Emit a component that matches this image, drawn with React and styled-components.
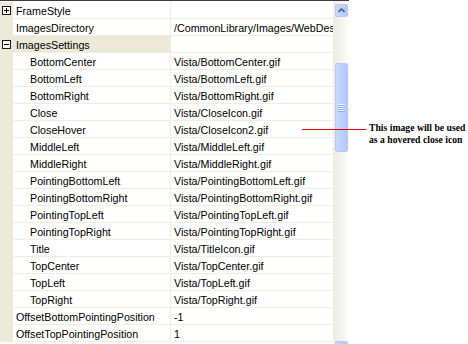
import React from "react";
import styled, { createGlobalStyle } from "styled-components";

const GUTTER = "#ECE9D8";
const LINE = "#F0EEE2";

const Global = createGlobalStyle`
  html, body { margin: 0; padding: 0; background: #fff; }
  #root { width: 468px; height: 344px; }
`;

const Page = styled.div`
  position: relative;
  width: 468px;
  height: 344px;
  overflow: hidden;
  background: #fff;
  font-family: "Liberation Sans", Arial, sans-serif;
  font-size: 10.7px;
  color: #000;
`;

const Panel = styled.div`
  display: flex;
  width: 349px;
  height: 344px;
  border-top: 1px solid #3c3c3c;
  box-sizing: border-box;
`;

const Table = styled.div`
  width: 334px;
  display: flex;
  flex-direction: column;
  padding-top: 1px;
`;

const Row = styled.div`
  display: grid;
  grid-template-columns: 13px 158px 163px;
  height: 17px;
  flex: none;
`;

const Gutter = styled.div`
  background: ${GUTTER};
  display: flex;
  align-items: center;
  padding-left: 2px;
`;

const ToggleBox = styled.div`
  position: relative;
  width: 9px;
  height: 9px;
  box-sizing: border-box;
  border: 1px solid #1a1a1a;
  background: #fff;
  &::before {
    content: "";
    position: absolute;
    left: 1px;
    top: 3px;
    width: 5px;
    height: 1px;
    background: #000;
  }
  &::after {
    content: "";
    display: ${(p) => (p.$open ? "none" : "block")};
    position: absolute;
    left: 3px;
    top: 1px;
    width: 1px;
    height: 5px;
    background: #000;
  }
`;

const NameCell = styled.div`
  box-sizing: border-box;
  height: 17px;
  padding: 3px 0 0 ${(p) => (p.$sub ? 17 : 3)}px;
  line-height: 13px;
  background: ${(p) => (p.$category ? GUTTER : "#fff")};
  border-bottom: 1px solid ${LINE};
  border-right: 1px solid ${LINE};
  white-space: nowrap;
  overflow: hidden;
`;

const ValueCell = styled.div`
  box-sizing: border-box;
  height: 17px;
  padding: 3px 0 0 3px;
  line-height: 13px;
  border-bottom: 1px solid ${LINE};
  border-right: 1px solid ${LINE};
  white-space: nowrap;
  overflow: hidden;
`;

const Scrollbar = styled.div`
  width: 15px;
  display: flex;
  flex-direction: column;
  padding: 3px 0 0 1px;
  overflow: hidden;
  background: linear-gradient(to right, #eeede5, #f6f5ef 60%, #fdfdfb);
`;

const blueButton = `
  box-sizing: border-box;
  width: 13px;
  border: 1px solid #b6c9f4;
  border-radius: 2px;
  background: linear-gradient(to right, #c9d9fd, #bcd0fb 50%, #b2c7f6);
  flex: none;
`;

const ArrowButton = styled.div`
  ${blueButton}
  height: 13px;
  display: flex;
  align-items: center;
  justify-content: center;
  margin-bottom: ${(p) => (p.$down ? "-10px" : "0")};
`;

const Thumb = styled.div`
  ${blueButton}
  height: 89px;
  margin-top: 46px;
  display: flex;
  flex-direction: column;
  align-items: center;
  justify-content: center;
  gap: 1px;
`;

const Grip = styled.span`
  width: 7px;
  height: 1px;
  background: #eef3ff;
  box-shadow: 0 1px 0 #8faaf0;
`;

const Track = styled.div`
  flex: 1;
`;

const Note = styled.div`
  position: absolute;
  left: 302px;
  top: 122px;
  display: flex;
  align-items: flex-start;
  gap: 3px;
`;

const Leader = styled.div`
  width: 64px;
  height: 1px;
  margin-top: 7px;
  background: #e00000;
`;

const NoteText = styled.div`
  font-family: "Liberation Serif", "Times New Roman", serif;
  font-weight: bold;
  font-size: 9.7px;
  line-height: 12px;
  color: #000;
  white-space: nowrap;
`;

const rows = [
  { name: "FrameStyle", value: "", toggle: "closed" },
  { name: "ImagesDirectory", value: "/CommonLibrary/Images/WebDesktop/" },
  { name: "ImagesSettings", value: "", toggle: "open", category: true },
  { name: "BottomCenter", value: "Vista/BottomCenter.gif", sub: true },
  { name: "BottomLeft", value: "Vista/BottomLeft.gif", sub: true },
  { name: "BottomRight", value: "Vista/BottomRight.gif", sub: true },
  { name: "Close", value: "Vista/CloseIcon.gif", sub: true },
  { name: "CloseHover", value: "Vista/CloseIcon2.gif", sub: true },
  { name: "MiddleLeft", value: "Vista/MiddleLeft.gif", sub: true },
  { name: "MiddleRight", value: "Vista/MiddleRight.gif", sub: true },
  { name: "PointingBottomLeft", value: "Vista/PointingBottomLeft.gif", sub: true },
  { name: "PointingBottomRight", value: "Vista/PointingBottomRight.gif", sub: true },
  { name: "PointingTopLeft", value: "Vista/PointingTopLeft.gif", sub: true },
  { name: "PointingTopRight", value: "Vista/PointingTopRight.gif", sub: true },
  { name: "Title", value: "Vista/TitleIcon.gif", sub: true },
  { name: "TopCenter", value: "Vista/TopCenter.gif", sub: true },
  { name: "TopLeft", value: "Vista/TopLeft.gif", sub: true },
  { name: "TopRight", value: "Vista/TopRight.gif", sub: true },
  { name: "OffsetBottomPointingPosition", value: "-1" },
  { name: "OffsetTopPointingPosition", value: "1" },
];

function Arrow({ down }) {
  return (
    <svg width="7" height="5" viewBox="0 0 7 5">
      <path
        d={down ? "M0.5 1 L3.5 4 L6.5 1" : "M0.5 4 L3.5 1 L6.5 4"}
        fill="none"
        stroke="#4d6185"
        strokeWidth="1.6"
      />
    </svg>
  );
}

export default function App() {
  return (
    <Page>
      <Global />
      <Panel>
        <Table>
          {rows.map((r) => (
            <Row key={r.name}>
              <Gutter>{r.toggle && <ToggleBox $open={r.toggle === "open"} />}</Gutter>
              <NameCell $sub={r.sub} $category={r.category}>
                {r.name}
              </NameCell>
              <ValueCell>{r.value}</ValueCell>
            </Row>
          ))}
        </Table>
        <Scrollbar>
          <ArrowButton>
            <Arrow />
          </ArrowButton>
          <Thumb>
            <Grip />
            <Grip />
            <Grip />
            <Grip />
          </Thumb>
          <Track />
          <ArrowButton $down>
            <Arrow down />
          </ArrowButton>
        </Scrollbar>
      </Panel>
      <Note>
        <Leader />
        <NoteText>
          This image will be used
          <br />
          as a hovered close icon
        </NoteText>
      </Note>
    </Page>
  );
}
